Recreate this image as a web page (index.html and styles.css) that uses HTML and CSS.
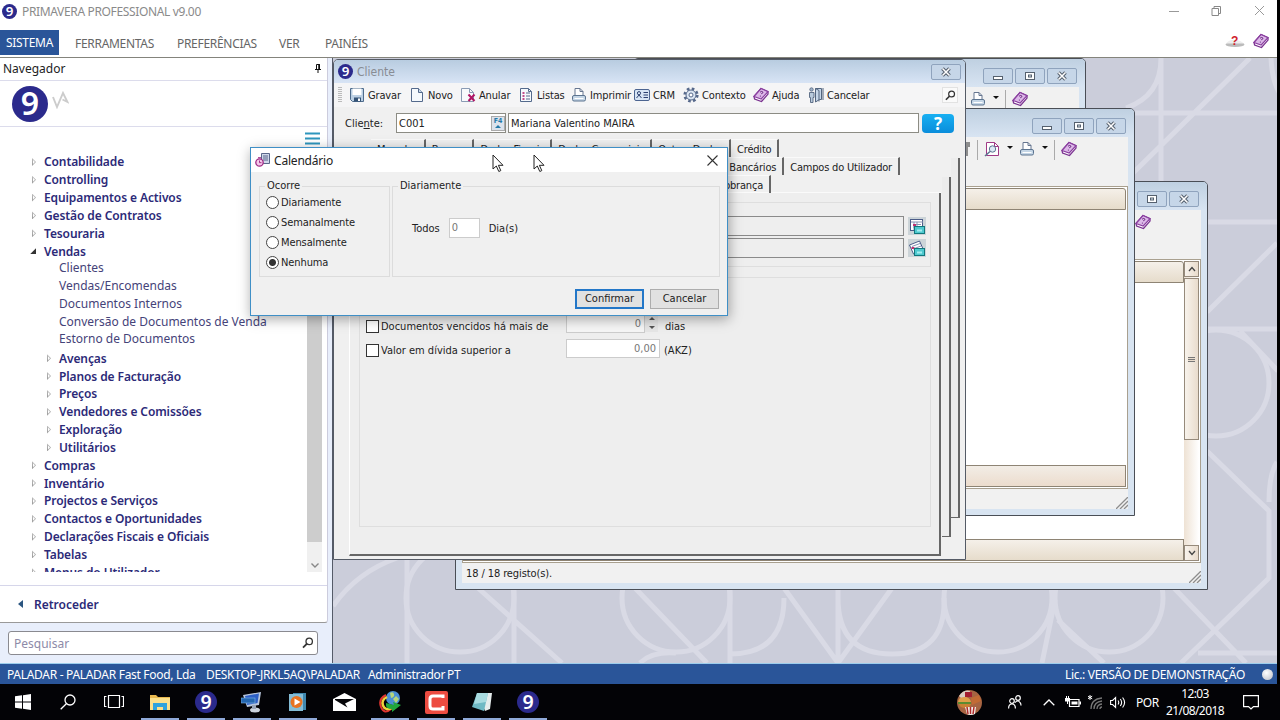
FILE: index.html
```html
<!DOCTYPE html>
<html lang="pt">
<head>
    <meta charset="UTF-8">
    <meta name="viewport" content="width=device-width, initial-scale=1.0">
    <title>PRIMAVERA PROFESSIONAL v9.00</title>
    <link rel="stylesheet" href="styles.css">
</head>
<body>
    <!-- Shared icons -->
    <svg class="sprite" xmlns="http://www.w3.org/2000/svg">
        <symbol id="nine" viewBox="0 0 36 36"><circle cx="18" cy="18" r="18" fill="#2b2a8c"/><text x="18" y="29" text-anchor="middle" class="nine-text">9</text></symbol>
        <symbol id="search" viewBox="0 0 12 12"><circle cx="7.2" cy="4.4" r="3.2" fill="none" stroke="#333" stroke-width="1.3"/><path d="M4.8 6.8L1 10.6" stroke="#333" stroke-width="1.8"/></symbol>
        <symbol id="book" viewBox="0 0 16 16"><path d="M1 9.5L8 1.5l7 3.2v2.4L8.5 14.5 1.6 12z" fill="#fff" stroke="#7a3190" stroke-width="1.3"/><path d="M1 9.5L8 1.5l7 3.2L8.2 12z" fill="#dcb8e8" stroke="#8a3fa0" stroke-width="1.2"/><path d="M7 5.2q2-1.6 3 0 0 1.2-1.8 1.6M7.4 8.6v1" fill="none" stroke="#6a2a80"/></symbol>
        <symbol id="printer" viewBox="0 0 16 16"><path d="M4 9V1.5h5L12 4.500V9" fill="#fff" stroke="#667690"/><path d="M9 1.500v3h3" fill="none" stroke="#667690"/><rect x="1.500" y="8.500" width="13" height="5.500" rx="1.500" fill="#c5d6e6" stroke="#5c7490"/><path d="M3.500 11.500h9" stroke="#fff"/></symbol>
        <symbol id="page" viewBox="0 0 16 16"><path d="M2.500 1.500h7l4 4v9h-11z" fill="#f5f9fd" stroke="#546a8c"/><path d="M9.500 1.500v4h4" fill="#c7d8ea" stroke="#546a8c"/></symbol>
        <symbol id="save" viewBox="0 0 16 16"><path d="M1.500 1.500h13v13h-11l-2-2z" fill="#bcd0e4" stroke="#4f6c8c"/><path d="M3.500 1.500h9v6.500h-9z" fill="#fff"/><path d="M5 10.500h7v4H5z" fill="#345376"/><path d="M9 11.500h2v2.500H9z" fill="#fff"/></symbol>
        <symbol id="delete" viewBox="0 0 16 16"><path d="M1.500 1.500h8l4 4v9h-12z" fill="#f8fafc" stroke="#8a9bb4"/><path d="M9.500 1.500v4h4" fill="none" stroke="#8a9bb4"/><path d="M8.500 7.500l6 6.500M14.500 7.500l-6 6.500" stroke="#b01565" stroke-width="2"/></symbol>
        <symbol id="list" viewBox="0 0 16 16"><path d="M2.500 1.500h8l3 3v10h-11z" fill="#f5f9fd" stroke="#546a8c"/><path d="M10.500 1.500v3h3" fill="none" stroke="#546a8c"/><path d="M4.500 6h2M4.500 9h2M4.500 12h2" stroke="#b01565" stroke-width="1.500"/><path d="M8 6h4M8 9h4M8 12h4" stroke="#546a8c"/></symbol>
        <symbol id="card" viewBox="0 0 16 16"><rect x=".5" y="2.500" width="15" height="11" rx="1.500" fill="#d7e5f5" stroke="#4c6490"/><circle cx="5" cy="6.200" r="1.600" fill="none" stroke="#2c4070"/><path d="M2.500 11l2.500-3 2.500 3M9.500 5.500H14M9.500 8H14M9.500 10.500H14" fill="none" stroke="#2c4070"/></symbol>
        <symbol id="gear" viewBox="0 0 16 16"><circle cx="8" cy="8" r="6.300" fill="none" stroke="#56688a" stroke-width="2.600" stroke-dasharray="2.600 2.350"/><circle cx="8" cy="8" r="5" fill="#dce6f2" stroke="#56688a"/><circle cx="8" cy="8" r="2" fill="#fff" stroke="#56688a"/></symbol>
        <symbol id="exit" viewBox="0 0 16 16"><circle cx="3.500" cy="2.500" r="1.700" fill="#9fb2c8" stroke="#53657f" stroke-width=".8"/><path d="M1.500 5.500h4.500v5H5v5H2.500v-5h-1z" fill="#b9cadc" stroke="#53657f" stroke-width=".9"/><path d="M7.500 1.500h6v11h-2l-4 2.500z" fill="#c6d6e8" stroke="#53657f"/><path d="M7.500 1.500l3.500 2v11M15 1v12" fill="none" stroke="#53657f"/></symbol>
        <symbol id="close-x" viewBox="0 0 12 12"><path d="M2.500 2.500l7 7M9.500 2.500l-7 7" stroke="#55606e" stroke-width="3.600"/><path d="M2.500 2.500l7 7M9.500 2.500l-7 7" stroke="#fff" stroke-width="1.500"/></symbol>
        <symbol id="min" viewBox="0 0 12 12"><rect x="1.500" y="6.500" width="9" height="3" fill="#fff" stroke="#55606e"/></symbol>
        <symbol id="max" viewBox="0 0 12 12"><rect x="1.500" y="2.500" width="9" height="7" fill="#fff" stroke="#55606e"/><rect x="4.500" y="5" width="3" height="2" fill="#dce6f0" stroke="#55606e"/></symbol>
        <symbol id="grip" viewBox="0 0 12 12"><path d="M0 12L12 0M4 12l8-8M8 12l4-4" stroke="#8d8d8d" stroke-width="1.300"/></symbol>
        <symbol id="pointer" viewBox="0 0 12 19"><path d="M1 1v14l3.300-3L6.800 17.500l2-.9-2.400-5.300H11z" fill="#fff" stroke="#222"/></symbol>
    </svg>

    <div class="screen">
        <div class="app">
            <header class="titlebar">
                <svg class="app-icon"><use href="#nine"/></svg>
                <span class="app-name">PRIMAVERA PROFESSIONAL v9.00</span>
                <svg class="caption-buttons" viewBox="0 0 100 14"><path d="M5 7.500h10M91 2l9 9M100 2l-9 9" fill="none" stroke="#999"/><path d="M48 4.500h6.500v7H48zM50 4.500v-2h6.500v7h-2" fill="none" stroke="#888"/></svg>
            </header>

            <nav class="menubar">
                <a class="menu active">SISTEMA</a>
                <a class="menu ferramentas">FERRAMENTAS</a>
                <a class="menu preferencias">PREFERÊNCIAS</a>
                <a class="menu ver">VER</a>
                <a class="menu">PAINÉIS</a>
                <div class="help-icons">
                    <svg width="20" height="14" viewBox="0 0 20 14"><ellipse cx="10" cy="10.500" rx="9.500" ry="2.500" fill="#bbb"/><path d="M1 9.500Q5 5 10 6q6 0 8.500 3.500z" fill="#eee"/><text x="9.500" y="11" text-anchor="middle" class="red-mark">?</text></svg>
                    <svg width="16" height="16"><use href="#book"/></svg>
                </div>
            </nav>

            <div class="workspace">
                <aside class="sidebar">
                    <div class="panel">
                        <div class="panel-title">Navegador
                            <svg width="8" height="9" viewBox="0 0 8 9"><path d="M2.500 5V.5h3V5M1 5.500h6M4 5.500V9" fill="none" stroke="#111"/><path d="M5 0v5" stroke="#111" stroke-width="1.500"/></svg>
                        </div>
                        <div class="brand">
                            <svg width="36" height="36"><use href="#nine"/></svg>
                            <svg class="brand-mark" width="17" height="18" viewBox="0 0 17 18"><path d="M1 6l4 10 6-14 4.500 9-5-2.500" fill="none" stroke="#ccc" stroke-width="1.900"/></svg>
                        </div>
                        <div class="tree-area">
                            <svg class="burger" width="15" height="13" viewBox="0 0 15 13"><path d="M0 1.500h15M0 6.500h15M0 11.500h15" stroke="#2e96bd" stroke-width="2"/></svg>
                            <ul class="tree">
                                <li class="node">Contabilidade</li>
                                <li class="node">Controlling</li>
                                <li class="node">Equipamentos e Activos</li>
                                <li class="node">Gestão de Contratos</li>
                                <li class="node">Tesouraria</li>
                                <li class="node open">Vendas</li>
                                <li class="leaf">Clientes</li>
                                <li class="leaf">Vendas/Encomendas</li>
                                <li class="leaf">Documentos Internos</li>
                                <li class="leaf">Conversão de Documentos de Venda</li>
                                <li class="leaf">Estorno de Documentos</li>
                                <li class="node sub">Avenças</li>
                                <li class="node sub">Planos de Facturação</li>
                                <li class="node sub">Preços</li>
                                <li class="node sub">Vendedores e Comissões</li>
                                <li class="node sub">Exploração</li>
                                <li class="node sub">Utilitários</li>
                                <li class="node">Compras</li>
                                <li class="node">Inventário</li>
                                <li class="node">Projectos e Serviços</li>
                                <li class="node">Contactos e Oportunidades</li>
                                <li class="node">Declarações Fiscais e Oficiais</li>
                                <li class="node">Tabelas</li>
                                <li class="node">Menus do Utilizador</li>
                            </ul>
                            <div class="tree-scroll">
                                <div class="tree-thumb"></div>
                                <svg width="8" height="5" viewBox="0 0 8 5"><path d="M.5.5L4 4 7.500.5" fill="none" stroke="#888" stroke-width="1.400"/></svg>
                            </div>
                        </div>
                        <div class="back"><i class="back-arrow"></i>Retroceder</div>
                    </div>
                    <div class="search-row">
                        <div class="search-box">Pesquisar<svg width="12" height="12"><use href="#search"/></svg></div>
                    </div>
                </aside>

                <main class="desktop">
                    <svg class="backdrop" viewBox="333 58 944 605">
                        <g fill="none" stroke="#d9dae5" stroke-width="5">
                            <path d="M1161 58v125M1085 113h192M1250 58L1130 176M1161 58q0 38-35 50M1271 58q1 22 8 34M1207 222h70"/>
                            <path d="M1277 243l-70 69M1207 329h70M1240 331l38 40M1207 451l62 60v67l-88 85M1277 462q-8 12-8 40"/>
                            <circle cx="1216" cy="383" r="53"/>
                            <circle cx="998" cy="598" r="54"/>
                            <circle cx="1109" cy="598" r="54"/>
                            <circle cx="460" cy="598" r="54"/>
                            <circle cx="676" cy="598" r="54"/>
                            <path d="M1174 588l72 75M1055 600l-13 63M1058 620l46 43M1198 653h80"/>
                            <path d="M333 606q24-34 64-48M407 560v103M514 588v75M478 588l84 75M635 588l72 75M640 663q12-12 36-10"/>
                            <path d="M730 588v75M730 654q54 0 54-56M784 588l54 75M838 588v75M838 598q0 56 54 56t52-56M892 588l-54 75"/>
                        </g>
                    </svg>

                    <!-- Back windows -->
                    <section class="window win-a">
                        <div class="win-title">
                            <span class="win-btn"><svg><use href="#min"/></svg></span><span class="win-btn"><svg><use href="#max"/></svg></span><span class="win-btn"><svg><use href="#close-x"/></svg></span>
                        </div>
                        <div class="win-client">
                            <div class="win-tools">
                                <svg width="16" height="16"><use href="#printer"/></svg><i class="drop"></i><i class="sep"></i><svg width="16" height="16"><use href="#book"/></svg>
                            </div>
                        </div>
                    </section>

                    <section class="window win-c">
                        <div class="win-title">
                            <span class="win-btn"><svg><use href="#min"/></svg></span><span class="win-btn"><svg><use href="#max"/></svg></span><span class="win-btn"><svg><use href="#close-x"/></svg></span>
                        </div>
                        <div class="win-client">
                            <div class="win-tools"><svg width="16" height="16"><use href="#book"/></svg></div>
                            <div class="grid-box">
                                <div class="grid-main"><div class="grid-head"></div><div class="grid-foot"></div></div>
                                <div class="grid-scroll">
                                    <span class="scroll-btn"><svg width="8" height="6" viewBox="0 0 8 6"><path d="M1 5l3-3.500L7 5" fill="none" stroke="#444" stroke-width="1.300"/></svg></span>
                                    <span class="scroll-thumb"><i></i></span>
                                    <span class="scroll-btn last"><svg width="8" height="6" viewBox="0 0 8 6"><path d="M1 1l3 3.500L7 1" fill="none" stroke="#444" stroke-width="1.300"/></svg></span>
                                </div>
                            </div>
                            <div class="win-status">18 / 18 registo(s).<svg width="12" height="12"><use href="#grip"/></svg></div>
                        </div>
                    </section>

                    <section class="window win-b">
                        <div class="win-title">
                            <span class="win-btn"><svg><use href="#min"/></svg></span><span class="win-btn"><svg><use href="#max"/></svg></span><span class="win-btn"><svg><use href="#close-x"/></svg></span>
                        </div>
                        <div class="win-client">
                            <div class="win-tools">
                                <svg width="16" height="16" viewBox="0 0 16 16"><path d="M3 5h3V3h3V1h6v5h-2v9H3z" fill="#8d8d8d"/><path d="M5 8h5M5 11h5" stroke="#ddd"/></svg>
                                <i class="sep"></i>
                                <svg width="16" height="16" viewBox="0 0 16 16"><path d="M2.500 1.500h8l4 4v9h-12z" fill="#fff" stroke="#a03a86"/><path d="M10.500 1.500v4h4" fill="none" stroke="#a03a86"/><circle cx="8.500" cy="8" r="3.200" fill="#dceaf5" stroke="#5c7490"/><path d="M6 10.500l-5 4.500" stroke="#5c7490" stroke-width="1.500"/></svg>
                                <i class="drop"></i>
                                <svg width="16" height="16"><use href="#printer"/></svg><i class="drop"></i><i class="sep"></i><svg width="16" height="16"><use href="#book"/></svg>
                            </div>
                            <div class="grid-box"><div class="grid-main"><div class="grid-head"></div><div class="grid-foot"></div></div></div>
                            <div class="win-status"><svg width="12" height="12"><use href="#grip"/></svg></div>
                        </div>
                    </section>

                    <!-- Customer form -->
                    <section class="client-win">
                        <div class="client-title">
                            <svg width="15" height="15"><use href="#nine"/></svg>Cliente
                            <span class="win-btn"><svg><use href="#close-x"/></svg></span>
                        </div>
                        <div class="toolbar">
                            <i class="handle"></i>
                            <span class="tool"><svg><use href="#save"/></svg>Gravar</span>
                            <span class="tool"><svg><use href="#page"/></svg>Novo</span>
                            <span class="tool"><svg><use href="#delete"/></svg>Anular</span>
                            <span class="tool"><svg><use href="#list"/></svg>Listas</span>
                            <span class="tool"><svg><use href="#printer"/></svg>Imprimir</span>
                            <span class="tool"><svg><use href="#card"/></svg>CRM</span>
                            <span class="tool"><svg><use href="#gear"/></svg>Contexto</span>
                            <span class="tool"><svg><use href="#book"/></svg>Ajuda</span>
                            <span class="tool"><svg><use href="#exit"/></svg>Cancelar</span>
                            <span class="find"><svg width="11" height="11"><use href="#search"/></svg></span>
                        </div>
                        <div class="client-row">
                            <label>Clie<u>n</u>te:</label>
                            <div class="field code">C001<span class="f4"><b>F4</b><i></i></span></div>
                            <div class="field name">Mariana Valentino MAIRA</div>
                            <div class="help-btn">?</div>
                        </div>
                        <div class="tabs">
                            <div class="tab-row first">
                                <span class="tab">Moradas</span><span class="tab">Bancos</span><span class="tab">Dados Fiscais</span><span class="tab">Dados Comerciais</span><span class="tab">Outros Dados</span><span class="tab">Crédito</span>
                            </div>
                            <div class="tab-row second">
                                <span class="tab">Encargos Bancários</span><span class="tab">Campos do Utilizador</span>
                            </div>
                            <div class="tab-row third">
                                <span class="tab">Cobrança</span>
                            </div>
                            <div class="sheet-back one"></div>
                            <div class="sheet-back two"></div>
                            <div class="sheet">
                                <div class="group dates">
                                    <div class="date-row"><span class="long-field"></span><span class="pick"><svg width="18" height="18" viewBox="0 0 18 18"><rect x="2.500" y="2.500" width="12" height="11" fill="#fff" stroke="#4b5c88"/><path d="M3 5h12M5 7.500h8M5 10h5M6 5v8M9 5v8" stroke="#8792b4"/><path d="M5 8h3" stroke="#c03070" stroke-width="2"/><rect x="6.500" y="9.500" width="10" height="7" fill="#4fc9cf" stroke="#11777d"/><path d="M9 12.500h5v2H9z" fill="#a5edf0"/></svg></span></div>
                                    <div class="date-row"><span class="long-field"></span><span class="pick"><svg width="18" height="18" viewBox="0 0 18 18"><path d="M1.500 6l10-4 4 9-10 4z" fill="#fff" stroke="#4b5c88"/><path d="M4 7.500l8-3M5 10l8-3" stroke="#8792b4"/><path d="M3.500 9h3" stroke="#c03070" stroke-width="2"/><rect x="6.500" y="9.500" width="10" height="7" fill="#4fc9cf" stroke="#11777d"/><path d="M9 12.500h5v2H9z" fill="#a5edf0"/></svg></span></div>
                                </div>
                                <div class="group limits">
                                    <div class="limit-row">
                                        <i class="check"></i><span class="limit-label">Documentos vencidos há mais de</span>
                                        <span class="num days">0</span>
                                        <span class="spin"><i class="up"></i><i class="down"></i></span><span class="unit">dias</span>
                                    </div>
                                    <div class="limit-row">
                                        <i class="check"></i><span class="limit-label">Valor em dívida superior a</span>
                                        <span class="num">0,00</span><span class="unit">(AKZ)</span>
                                    </div>
                                </div>
                            </div>
                        </div>
                    </section>
                </main>
            </div>

            <footer class="statusbar">
                <span class="company">PALADAR - PALADAR Fast Food, Lda</span>
                <span class="host">DESKTOP-JRKL5AQ\PALADAR</span>
                <span class="user">Administrador</span>
                <span>PT</span>
                <span class="licence">Lic.: VERSÃO DE DEMONSTRAÇÃO</span>
                <i class="led"></i>
            </footer>
        </div>

        <div class="taskbar">
            <div class="task"><svg width="16" height="16" viewBox="0 0 16 16"><path d="M0 2.300L7 1.300v6.200H0zM8 1.200L16 0v7.500H8zM0 8.500h7v6.200l-7-1zM8 8.500h8V16l-8-1.200z" fill="#fff"/></svg></div>
            <div class="task"><svg width="16" height="16" viewBox="0 0 16 16"><circle cx="10" cy="6" r="5" fill="none" stroke="#fff" stroke-width="1.300"/><path d="M6.300 9.700L.7 15.300" stroke="#fff" stroke-width="1.300"/></svg></div>
            <div class="task"><svg width="20" height="16" viewBox="0 0 20 16"><path d="M4.500 1.500h11v12h-11zM2.500 2.500h-2v10h2M17.500 2.500h2v10h-2" fill="none" stroke="#fff" stroke-width="1.200"/></svg></div>
            <div class="task running"><svg width="22" height="18" viewBox="0 0 22 18"><path d="M1 2h6l2 2h12v13H1z" fill="#e9b94f"/><path d="M1 5h20v12H1z" fill="#fbe08c"/><path d="M4 17v-7h14v7h-4v-3H8v3z" fill="#2fa3dd"/></svg></div>
            <div class="task running"><svg width="22" height="22"><use href="#nine"/></svg></div>
            <div class="task running"><svg width="22" height="22" viewBox="0 0 22 22"><path d="M2 4l18-3-2 13-12 2z" fill="#b9c7dc"/><path d="M4 5l14-2.500-1.500 9.500L6 14z" fill="#2d5fc4"/><rect y="7" width="14" height="5" fill="#2467b0" stroke="#7fb7ea" stroke-width=".6"/><ellipse cx="14" cy="19" rx="5" ry="2.500" fill="#ccd3dd"/><path d="M11 14h4v4h-4z" fill="#99a5b8"/></svg></div>
            <div class="task running"><svg width="20" height="20" viewBox="0 0 20 20"><path d="M5 1h13v17H5z" fill="#3f87ad"/><path d="M1 2h14v17H1z" fill="#84bdd6"/><circle cx="8.500" cy="10" r="6" fill="#e87322"/><path d="M6.500 6.500v7l6-3.500z" fill="#fff"/></svg></div>
            <div class="task"><svg width="23" height="18" viewBox="0 0 23 18"><path d="M0 6L11.500 0 23 6v12H0z" fill="#fff"/><path d="M2 6h19l-9 4.500 2.500 4L2 7z" fill="#050508"/></svg></div>
            <div class="task running"><svg width="24" height="22" viewBox="0 0 24 22"><circle cx="15" cy="7" r="7" fill="#4b8fd4"/><path d="M12 2q3-2 4 1t-3 4zM18 5l3 3-3 4-3-4z" fill="#b6d67b"/><path d="M8 4Q0 8 3 16t10 2" fill="none" stroke="#e3342f" stroke-width="2"/><path d="M9 6Q3 9 5 14.500T14 17" fill="none" stroke="#f1d13b" stroke-width="2.500"/><path d="M8 12l8 2-1-3 8 3-9 7v-3q-7 0-6-6z" fill="#21a63c"/></svg></div>
            <div class="task running"><svg width="23" height="23" viewBox="0 0 23 23"><rect width="23" height="23" rx="2" fill="#ed4c41"/><path d="M18 7V5H8Q5 5 5 8v7q0 3 3 3h10v-3" fill="none" stroke="#fff" stroke-width="3"/></svg></div>
            <div class="task running"><svg width="22" height="20" viewBox="0 0 22 20"><path d="M7 1h14l-2 16-5 2z" fill="#e5ecec"/><path d="M6 1h11l-4 18-12-4z" fill="#6fb9c4"/><path d="M6 1h11l-2 9-12 2z" fill="#a8dbe0"/></svg></div>
            <div class="task running"><svg width="22" height="22"><use href="#nine"/></svg></div>

            <div class="tray">
                <svg class="burger-ball" width="25" height="25" viewBox="0 0 25 25"><circle cx="12.500" cy="12.500" r="12.500" fill="#a66442"/><path d="M2 6q5-7 11-5l-1 5-7 3z" fill="#d9cfc4"/><path d="M8 2h7v5H8z" fill="#a31e30"/><path d="M1 13q0-6 6-6t7 5z" fill="#e0a04a"/><path d="M1 12h13v2H1z" fill="#5c8c32"/><path d="M2 14h12q-1 4-6 4t-6-4z" fill="#c98134"/><path d="M14 8l8-3 2 6-9 4z" fill="#c26b35"/><path d="M8 17h11l-1 7q-5 2-8 0z" fill="#f3eee8"/><path d="M10 17l1 7M13.500 17v7M17 17l-1 7" stroke="#b02a2a" stroke-width="1.500"/></svg>
                <svg class="people" width="14" height="14" viewBox="0 0 14 14"><circle cx="4" cy="6" r="2.300" fill="none" stroke="#fff" stroke-width="1.200"/><circle cx="10" cy="3" r="2.300" fill="none" stroke="#fff" stroke-width="1.200"/><path d="M.6 13.500q0-4.500 3.400-4.500t3.400 4.500M7 7.500q3-3 5 0 1 1 1 3" fill="none" stroke="#fff" stroke-width="1.200"/></svg>
                <svg class="chev" width="12" height="7" viewBox="0 0 12 7"><path d="M.7 6.300L6 1l5.300 5.300" fill="none" stroke="#fff" stroke-width="1.300"/></svg>
                <svg class="battery" width="16" height="12" viewBox="0 0 16 12"><path d="M4.500 3.500h9.500v7H4.500z" fill="none" stroke="#fff" stroke-width="1.200"/><path d="M6.500 5.500h6v3h-6zM14.500 5.500H16v3h-1.500zM0 2h5v3.500H3V8H2V5.500H0zM1 0h1v2H1zM3 0h1v2H3z" fill="#fff"/></svg>
                <svg class="wifi" width="15" height="15" viewBox="0 0 15 15"><path d="M3 14Q3 4 14 3M6 14q0-7 8-8M9 14q0-4.500 5-5M12 14q0-2 2-2" fill="none" stroke="#777" stroke-width="1.300"/><path d="M2 0v5M-.2 1.200l4.400 2.600M4.200 1.200L-.2 3.800" stroke="#fff"/></svg>
                <svg class="sound" width="16" height="13" viewBox="0 0 16 13"><path d="M.6 4.500h2l3-3v10l-3-3h-2zM8 4.500q1.500 2 0 4M10.300 3q2.700 3.500 0 7M12.600 1.500q4 5 0 10" fill="none" stroke="#fff" stroke-width="1.100"/></svg>
                <span class="lang">POR</span>
                <div class="clock"><span>12:03</span><span>21/08/2018</span></div>
                <svg class="notes" width="16" height="15" viewBox="0 0 16 15"><path d="M.6.6h14.800v11H10.500L8 14l-2.500-2.400H.6z" fill="none" stroke="#fff" stroke-width="1.200"/></svg>
            </div>
        </div>

        <!-- Schedule dialog -->
        <div class="dialog">
            <div class="dialog-title">
                <svg width="15" height="14" viewBox="0 0 15 14"><path d="M6.500.5h8v10h-8z" fill="#cfd8ea" stroke="#5a678a"/><path d="M8 3h5M8 5h5M8 7h5" stroke="#5a678a"/><circle cx="4.500" cy="9.500" r="3.700" fill="#f5c9ea" stroke="#a02c86" stroke-width="1.300"/><path d="M4.500 7.500v2.200h2M3 4.700h3" fill="none" stroke="#a02c86"/></svg>
                Calendário
                <svg class="dialog-close" width="11" height="11" viewBox="0 0 11 11"><path d="M.5.5l10 10M10.500.5l-10 10" stroke="#333" stroke-width="1.100"/></svg>
            </div>
            <div class="dialog-body">
                <fieldset class="occurs">
                    <legend>Ocorre</legend>
                    <label class="option"><i class="radio"></i>Diariamente</label>
                    <label class="option"><i class="radio"></i>Semanalmente</label>
                    <label class="option"><i class="radio"></i>Mensalmente</label>
                    <label class="option"><i class="radio on"></i>Nenhuma</label>
                </fieldset>
                <fieldset class="daily">
                    <legend>Diariamente</legend>
                    <div class="every"><span>Todos</span><span class="day-input">0</span><span>Dia(s)</span></div>
                </fieldset>
            </div>
            <div class="dialog-actions">
                <span class="btn default">Confirmar</span>
                <span class="btn">Cancelar</span>
            </div>
        </div>
        <svg class="cursor ghost"><use href="#pointer"/></svg>
        <svg class="cursor"><use href="#pointer"/></svg>
    </div>
</body>
</html>
```

FILE: styles.css
```css
* {
    box-sizing: border-box;
}

body {
    margin: 0;
    font-family: "DejaVu Sans Condensed", "Noto Sans", sans-serif;
    font-size: 11px;
    color: #222;
}

svg {
    display: block;
    flex: none;
}

.sprite {
    position: absolute;
    width: 0;
    height: 0;
}

.nine-text {
    font: 600 32px "Noto Sans", sans-serif;
    fill: #fff;
}

.red-mark {
    font: bold 12px "Liberation Sans", sans-serif;
    fill: #d0202a;
}

.screen {
    position: relative;
    width: 1280px;
    height: 720px;
    overflow: hidden;
    background: #000;
}

.app {
    width: 1277px;
    height: 684px;
    display: flex;
    flex-direction: column;
    background: #fff;
    font-family: "Noto Sans", sans-serif;
}

/* Title and menu */
.titlebar {
    height: 30px;
    display: flex;
    align-items: center;
    padding: 0 13px 8px 2px;
    color: #8a8a8a;
}

.app-icon {
    width: 15px;
    height: 15px;
    margin-right: 5px;
}

.app-name {
    font-size: 12px;
    letter-spacing: -0.35px;
}

.caption-buttons {
    width: 100px;
    height: 14px;
    margin-left: auto;
    overflow: visible;
}

.menubar {
    height: 28px;
    display: flex;
    border-bottom: 1px solid #84847c;
    color: #666;
    font-size: 12px;
    line-height: 27px;
    letter-spacing: -0.3px;
}

.menu.active {
    width: 59px;
    height: 25px;
    margin-right: 16px;
    line-height: 25px;
    text-align: center;
    background: #2a5599;
    color: #fff;
}

.ferramentas { width: 102px; }
.preferencias { width: 102px; }
.ver { width: 46px; }

.help-icons {
    display: flex;
    align-items: center;
    gap: 8px;
    margin-left: auto;
    padding: 0 8px 6px 0;
}

.workspace {
    flex: 1;
    display: flex;
    min-height: 0;
}

/* Sidebar */
.sidebar {
    width: 333px;
    background: #e8eefb;
    border-right: 1px solid #555b68;
    color: #2c2a78;
}

.panel {
    width: 328px;
    height: 565px;
    background: #fff;
    border-right: 1px solid #ccd;
    border-bottom: 1px solid #999;
    border-bottom-right-radius: 3px;
}

.panel-title {
    height: 23px;
    display: flex;
    justify-content: space-between;
    align-items: center;
    padding: 0 5px 1px 3px;
    border-bottom: 1px solid #dcdcec;
    color: #222;
    font-size: 12px;
}

.brand {
    height: 46px;
    display: flex;
    align-items: center;
    padding-left: 12px;
    border-bottom: 1px solid #dcdcec;
}

.brand-mark {
    margin: -8px 0 0 4px;
}

.tree-area {
    height: 459px;
    display: grid;
    grid-template: 26px 419px / 307px 15px;
    border-bottom: 1px solid #d6d6ea;
}

.burger {
    grid-column: 1 / 3;
    justify-self: end;
    margin: 5px 2px 0 0;
}

.tree {
    list-style: none;
    margin: 0;
    padding: 0;
    overflow: hidden;
    font-size: 12px;
    white-space: nowrap;
}

.tree li {
    height: 17.85px;
    line-height: 17px;
}

.node {
    display: flex;
    align-items: center;
    padding-left: 32px;
    font-weight: 600;
    letter-spacing: -0.1px;
}

.node::before {
    content: "";
    width: 4px;
    height: 8px;
    margin-right: 8px;
    background: linear-gradient(#bbb, #999);
    clip-path: polygon(0 0, 100% 50%, 0 100%, 0 0, 1px 2px, 1px 6px, 3px 50%, 1px 2px);
}

.node.open::before {
    width: 6px;
    height: 6px;
    margin: 0 8px 0 -2px;
    background: #333;
    clip-path: polygon(100% 0, 100% 100%, 0 100%);
}

.node.sub {
    padding-left: 47px;
}

.tree .leaf {
    padding-left: 59px;
    line-height: 15px;
    color: #454379;
}

.tree-scroll {
    display: flex;
    flex-direction: column;
    align-items: center;
    background: #f0f0f0;
}

.tree-thumb {
    width: 15px;
    height: 389px;
    margin-bottom: 21px;
    background: #cdcdcd;
}

.back {
    height: 36px;
    display: flex;
    align-items: center;
    gap: 11px;
    padding-left: 18px;
    font-size: 12px;
    font-weight: 600;
}

.back-arrow {
    width: 5px;
    height: 8px;
    background: #2a5580;
    clip-path: polygon(100% 0, 100% 100%, 0 50%);
}

.search-row {
    padding: 8px 14px 0 8px;
}

.search-box {
    height: 24px;
    display: flex;
    align-items: center;
    justify-content: space-between;
    padding: 0 3px 0 5px;
    border: 1px solid #8a8a90;
    border-radius: 3px;
    background: #fff;
    color: #8d8aa8;
    font-size: 12px;
}

/* Desktop area */
.desktop {
    position: relative;
    flex: 1;
    overflow: hidden;
    background: #cbcdda;
    font-family: "DejaVu Sans Condensed", "Noto Sans", sans-serif;
}

.backdrop {
    position: absolute;
    width: 944px;
    height: 605px;
}

.window {
    position: absolute;
    display: flex;
    flex-direction: column;
    padding: 0 6px 6px;
    border: 1px solid #4a4e56;
    border-radius: 5px 5px 0 0;
    background: #d8e4f1;
}

.win-a {
    left: 300px;
    top: 0;
    width: 453px;
    height: 200px;
}

.win-c {
    left: 122px;
    top: 123px;
    width: 753px;
    height: 409px;
}

.win-b {
    left: 300px;
    top: 50px;
    width: 502px;
    height: 408px;
}

.win-title {
    height: 28px;
    margin: 0 -6px;
    padding: 9px 8px 0 0;
    display: flex;
    justify-content: flex-end;
    gap: 2px;
    border-radius: 4px 4px 0 0;
    background: linear-gradient(#bfd0e1, #d8e4f2);
}

.win-btn {
    width: 30px;
    height: 16px;
    display: flex;
    align-items: center;
    justify-content: center;
    border: 1px solid #8fa3bd;
    border-radius: 2px;
    background: #c6d6e8;
}

.win-btn svg {
    width: 12px;
    height: 12px;
}

.win-client {
    flex: 1;
    display: flex;
    flex-direction: column;
    background: #f1f1f1;
}

.win-tools {
    height: 49px;
    display: flex;
    justify-content: flex-end;
    align-items: flex-start;
    padding: 4px 51px 0 0;
}

.win-c .win-tools {
    padding-right: 50px;
}

.drop {
    margin: 5px 0 0 7px;
    border: 3px solid transparent;
    border-top-color: #111;
}

.drop + svg {
    margin-left: 6px;
}

.sep {
    width: 1px;
    height: 20px;
    margin: -1px 6px 0;
    background: #aaa;
}

.grid-box {
    flex: 1;
    display: flex;
    padding: 1px 1px 1px 0;
    border: 1px solid #a9a08f;
    background: #fff;
}

.grid-main {
    flex: 1;
    display: flex;
    flex-direction: column;
    justify-content: space-between;
}

.grid-head,
.grid-foot {
    height: 22px;
    border: 1px solid #8e8474;
    background: linear-gradient(#f5f0e9, #e6dccb);
}

.grid-head {
    border-top-right-radius: 3px;
}

.win-b .grid-foot {
    background: linear-gradient(#f2ede6, #ecdccd);
}

.grid-scroll {
    width: 15px;
    display: flex;
    flex-direction: column;
    background: linear-gradient(90deg, #eee2d4, #fff);
}

.scroll-btn,
.scroll-thumb {
    height: 16px;
    display: flex;
    align-items: center;
    justify-content: center;
    border: 1px solid #968a7b;
    background: linear-gradient(90deg, #f8f3ec, #e9dccd);
}

.scroll-thumb {
    height: 162px;
    margin-top: 1px;
}

.scroll-thumb i {
    width: 7px;
    height: 5px;
    border: solid #777;
    border-width: 1px 0;
    background: linear-gradient(#e9dccd 1px, #777 1px 2px, #e9dccd 2px);
}

.scroll-btn.last {
    margin-top: auto;
}

.win-status {
    height: 20px;
    display: flex;
    justify-content: space-between;
    align-items: center;
    padding-left: 4px;
    letter-spacing: -0.1px;
}

.win-status svg {
    align-self: flex-end;
    margin-left: auto;
}

/* Customer window */
.client-win {
    position: absolute;
    left: 0;
    top: 1px;
    width: 633px;
    height: 501px;
    border: 1px solid #555b66;
    border-radius: 5px 5px 0 0;
    background: #f0f0f0;
}

.client-title {
    height: 23px;
    display: flex;
    align-items: center;
    gap: 4px;
    padding: 0 4px 0 4px;
    border-radius: 4px 4px 0 0;
    background: linear-gradient(#b8cce0, #d8e4f5);
    color: #888c94;
    font-size: 12px;
}

.client-title .win-btn {
    margin-left: auto;
}

.toolbar {
    height: 24px;
    display: grid;
    grid-template-columns: 11px 60px 51px 58px 53px 63px 49px 70px 55px 134px 16px;
    align-items: center;
    padding-left: 4px;
    background: #f5f5f6;
}

.handle {
    width: 4px;
    height: 16px;
    background: repeating-linear-gradient(#bbb 0 1px, #f5f5f6 1px 2px);
}

.tool {
    display: flex;
    align-items: center;
    gap: 3px;
    letter-spacing: -0.15px;
}

.tool svg {
    width: 16px;
    height: 16px;
}

.find {
    height: 16px;
    display: flex;
    align-items: center;
    justify-content: center;
    background: #fafafa;
    border: 1px solid #e2e2e2;
}

.client-row {
    height: 32px;
    display: flex;
    align-items: center;
    padding-left: 11px;
}

.client-row label {
    width: 51px;
}

.field {
    height: 20px;
    display: flex;
    align-items: center;
    padding-left: 2px;
    border: 1px solid #8c8c84;
    background: #fff;
}

.code {
    width: 110px;
    justify-content: space-between;
    margin-right: 2px;
}

.f4 {
    width: 14px;
    height: 15px;
    display: flex;
    flex-direction: column;
    align-items: center;
    border: 1px solid #aaa;
    background: #dce3ec;
    color: #2479a8;
    font-size: 7px;
    line-height: 8px;
}

.f4 i {
    border: 3px solid transparent;
    border-top: 0;
    border-bottom-color: #2479a8;
}

.name {
    width: 411px;
    margin-right: 3px;
}

.help-btn {
    width: 32px;
    height: 19px;
    border-radius: 4px;
    background: linear-gradient(#18b0f2, #0a8ddb);
    color: #fff;
    font: bold 17px/19px "Noto Sans", sans-serif;
    text-align: center;
}

.tabs {
    position: relative;
    height: 420px;
    padding-left: 15px;
}

.tab-row {
    height: 18px;
    display: flex;
}

.tab {
    padding: 3px 6px 0;
    border-right: 2px solid #666;
    border-top: 1px solid #fafafa;
    white-space: nowrap;
    line-height: 13px;
    letter-spacing: -0.2px;
}

.first {
    padding-left: 22px;
}

.second {
    width: 551px;
    justify-content: flex-end;
}

.third {
    width: 422px;
    justify-content: flex-end;
}

/* Tab pages stacked behind the current one */
.sheet-back {
    position: absolute;
    width: 9px;
    border: solid #666;
    border-width: 0 2px 1px 0;
    background: #ececec;
}

.sheet-back.one {
    left: 617px;
    top: 19px;
    height: 360px;
}

.sheet-back.two {
    left: 608px;
    top: 38px;
    height: 360px;
}

.sheet {
    width: 592px;
    height: 363px;
    padding: 9px 8px 0 9px;
    border: solid #666;
    border-width: 0 2px 2px 0;
    border-left: 1px solid #fff;
    background: #eee;
    box-shadow: 0 -1px #fafafa;
}

.group {
    border: 1px solid #dedede;
}

.dates {
    height: 65px;
    padding: 13px 4px 0 8px;
}

.date-row {
    height: 22px;
    display: flex;
    justify-content: space-between;
}

.long-field {
    width: 536px;
    height: 20px;
    border: 1px solid #8a8a8a;
}

.pick {
    width: 18px;
    height: 18px;
    margin-top: 1px;
    background: #ccd4d8;
}

.limits {
    height: 250px;
    margin-top: 10px;
    padding: 36px 0 0 6px;
}

.limit-row {
    height: 24px;
    display: flex;
    align-items: center;
}

.check {
    width: 13px;
    height: 13px;
    margin-right: 2px;
    border: 1px solid #333;
    background: #fff;
}

.limit-label {
    width: 185px;
}

.num {
    width: 94px;
    height: 19px;
    margin: -3px 4px 0 0;
    padding: 2px 3px 0;
    border: 1px solid #ccc;
    background: #fff;
    color: #777;
    text-align: right;
    line-height: 13px;
}

.days {
    width: 79px;
    margin: -6px 0 0;
    background: #f6f6f6;
}

.spin {
    width: 13px;
    height: 18px;
    display: flex;
    flex-direction: column;
    justify-content: space-around;
    align-items: center;
    margin: -6px 7px 0 0;
    background: #e6e6e6;
}

.up,
.down {
    border: 3px solid transparent;
}

.up {
    border-top: 0;
    border-bottom-color: #555;
}

.down {
    border-bottom: 0;
    border-top-color: #555;
}

/* Status bar */
.statusbar {
    height: 21px;
    display: flex;
    align-items: center;
    padding: 0 4px 0 7px;
    border-top: 1px solid #9ccdec;
    background: #2a5599;
    color: #fff;
    font-size: 12px;
    letter-spacing: -0.3px;
    white-space: nowrap;
}

.company { width: 199px; }
.host { width: 162px; }
.user { width: 79px; }

.licence {
    margin-left: auto;
}

.led {
    width: 11px;
    height: 11px;
    margin-left: 17px;
    border-radius: 50%;
    background: radial-gradient(circle at 40% 35%, #fff, #b9bcc6);
}

/* Taskbar */
.taskbar {
    height: 36px;
    display: flex;
    padding-right: 21px;
    background: #030306;
    color: #fff;
    font-family: "Noto Sans", sans-serif;
}

.task {
    width: 46px;
    display: flex;
    align-items: center;
    justify-content: center;
    flex: none;
}

.task:first-child {
    width: 45px;
}

.running {
    background: linear-gradient(#8fa9d8, #8fa9d8) center bottom / 38px 2px no-repeat;
}

.tray {
    flex: 1;
    display: flex;
    align-items: center;
    justify-content: flex-end;
}

.people { margin-left: 26px; }
.chev { margin-left: 21px; }
.battery { margin-left: 10px; }
.wifi { margin-left: 7px; }
.sound { margin-left: 7px; }

.lang {
    width: 22px;
    margin-left: 10px;
    font-size: 12px;
    letter-spacing: -0.5px;
}

.clock {
    width: 62px;
    display: flex;
    flex-direction: column;
    align-items: center;
    margin: 0 17px 0 6px;
    font-size: 12px;
    line-height: 17px;
    letter-spacing: -0.6px;
}

/* Dialog */
.dialog {
    position: absolute;
    left: 250px;
    top: 147px;
    width: 478px;
    height: 169px;
    border: 1px solid #3f8fc6;
    background: #f0f0f0;
    box-shadow: 1px 3px 12px rgba(0, 0, 0, 0.35);
}

.dialog-title {
    height: 24px;
    display: flex;
    align-items: center;
    gap: 4px;
    padding: 0 9px 0 4px;
    background: #fff;
    font-family: "Noto Sans", sans-serif;
    font-size: 12px;
    letter-spacing: -0.2px;
}

.dialog-close {
    margin-left: auto;
}

.dialog-body {
    display: flex;
    gap: 2px;
    padding: 7px 7px 0 8px;
}

fieldset {
    height: 98px;
    margin: 0;
    padding: 0;
    border: 1px solid #dcdcdc;
}

legend {
    margin-left: 5px;
    padding: 0 2px;
    height: 14px;
    line-height: 14px;
}

.occurs {
    width: 131px;
}

.daily {
    flex: 1;
}

.option {
    height: 19.800px;
    display: flex;
    align-items: center;
    gap: 2px;
    padding-left: 6px;
    letter-spacing: -0.1px;
}

.radio {
    width: 13px;
    height: 13px;
    border: 1px solid #444;
    border-radius: 50%;
    background: #fff;
}

.radio.on {
    background: radial-gradient(#333 3px, #fff 4px);
}

.every {
    display: flex;
    align-items: center;
    gap: 9px;
    padding: 25px 0 0 19px;
}

.day-input {
    width: 31px;
    height: 20px;
    padding: 2px;
    border: 1px solid #ccc;
    background: #fff;
    color: #777;
}

.dialog-actions {
    display: flex;
    justify-content: flex-end;
    gap: 6px;
    padding: 12px 8px 0 0;
}

.btn {
    width: 69px;
    height: 20px;
    border: 1px solid #adadad;
    background: #e1e1e1;
    line-height: 18px;
    text-align: center;
}

.btn.default {
    border: 2px solid #2377c8;
    line-height: 16px;
}

.cursor {
    position: absolute;
    left: 533px;
    top: 154px;
    width: 12px;
    height: 19px;
}

.cursor.ghost {
    left: 492px;
}
```
